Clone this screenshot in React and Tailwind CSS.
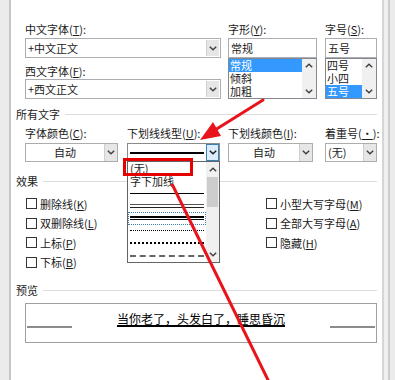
import React from "react";

const Chev = ({ up = false, color = "#404040" }) => (
  <svg width="8" height="5" viewBox="0 0 8 5">
    <polyline
      points={up ? "0.8,4.3 4,1.2 7.2,4.3" : "0.8,0.7 4,3.8 7.2,0.7"}
      fill="none"
      stroke={color}
      strokeWidth="1.4"
    />
  </svg>
);

const U = ({ children }) => (
  <span className="underline underline-offset-[1px]">{children}</span>
);

function Label({ children }) {
  return <div className="h-[14px] leading-[14px] whitespace-nowrap">{children}</div>;
}

function EditCombo({ text }) {
  return (
    <div className="h-[20px] flex border border-[#abadb3] bg-white">
      <div className="flex-1 pl-[2px] leading-[18px] whitespace-nowrap">{text}</div>
      <div className="w-[13px] flex items-center justify-center bg-[#e6e6e6] border-l border-[#cfcfcf] my-[1px] mr-[1px]">
        <Chev />
      </div>
    </div>
  );
}

function Combo({ text, center }) {
  return (
    <div className="h-[19px] flex border border-[#adadad] bg-white">
      <div
        className={
          center
            ? "flex-1 text-center leading-[17px] whitespace-nowrap"
            : "flex-1 pl-[2px] leading-[17px] whitespace-nowrap"
        }
      >
        {text}
      </div>
      <div className="w-[13px] flex items-center justify-center bg-[#e6e6e6] border-l border-[#cfcfcf]">
        <Chev />
      </div>
    </div>
  );
}

function ListBox({ items, sel }) {
  return (
    <div className="h-[41px] border border-[#828790] bg-white flex">
      <div className="flex-1 flex flex-col">
        {items.map((t, i) => (
          <div
            key={t}
            className={
              i === sel
                ? "h-[13px] leading-[13px] pl-[1px] bg-[#3399ff] text-white whitespace-nowrap"
                : "h-[13px] leading-[13px] pl-[1px] whitespace-nowrap"
            }
          >
            {t}
          </div>
        ))}
      </div>
      <div className="w-[14px] bg-[#f0f0f0] flex flex-col items-center justify-between py-[4px]">
        <Chev up />
        <Chev />
      </div>
    </div>
  );
}

function Group({ title }) {
  return (
    <div className="h-[14px] flex items-center">
      <span className="leading-[14px] whitespace-nowrap">{title}</span>
      <div className="flex-1 h-px bg-[#dcdcdc] ml-[5px]" />
    </div>
  );
}

function Check({ children }) {
  return (
    <div className="h-[19.5px] flex items-center">
      <div className="w-[11px] h-[11px] border border-[#333333] bg-white" />
      <span className="ml-[3px] leading-[14px] whitespace-nowrap">{children}</span>
    </div>
  );
}

function Row({ children, className = "" }) {
  return <div className={"h-[12.5px] flex items-center " + className}>{children}</div>;
}

export default function App() {
  return (
    <div className="relative w-[395px] h-[380px] overflow-hidden flex bg-white text-[11px] text-[#1a1a1a] font-['Noto_Sans_CJK_SC','Noto_Sans',sans-serif]">
      <div className="w-[11px] h-full bg-[#ebebeb] border-r-2 border-[#c6c6c6]" />
      <div className="w-[371px] h-full flex flex-col px-[5px]">
        {/* fonts row */}
        <div className="mt-[22px] pl-[9px] flex">
          <div className="w-[196px] flex flex-col">
            <Label>
              中文字体(<U>T</U>):
            </Label>
            <div className="mt-[2px]">
              <EditCombo text="+中文正文" />
            </div>
            <div className="mt-[6px]">
              <Label>
                西文字体(<U>F</U>):
              </Label>
            </div>
            <div className="mt-[1px]">
              <EditCombo text="+西文正文" />
            </div>
          </div>
          <div className="w-[89px] ml-[7px] flex flex-col">
            <Label>
              字形(<U>Y</U>):
            </Label>
            <div className="mt-[2px] h-[20px] border border-[#abadb3] pl-[2px] leading-[18px]">常规</div>
            <ListBox items={["常规", "倾斜", "加粗"]} sel={0} />
          </div>
          <div className="w-[52px] ml-[8px] flex flex-col">
            <Label>
              字号(<U>S</U>):
            </Label>
            <div className="mt-[2px] h-[20px] border border-[#abadb3] pl-[2px] leading-[18px]">五号</div>
            <ListBox items={["四号", "小四", "五号"]} sel={2} />
          </div>
        </div>

        {/* all text */}
        <div className="mt-[8px]">
          <Group title="所有文字" />
        </div>
        <div className="mt-[5px] pl-[9px] flex">
          <div className="w-[93px]">
            <Label>
              字体颜色(<U>C</U>):
            </Label>
            <div className="mt-[3px]">
              <Combo text="自动" center />
            </div>
          </div>
          <div className="w-[93px] ml-[9px]">
            <Label>
              下划线线型(<U>U</U>):
            </Label>
            <div className="mt-[3px] h-[19px] flex border border-[#8a8a8a] bg-white">
              <div className="flex-1 flex items-center px-[2px]">
                <div className="w-full h-[2px] bg-black" />
              </div>
              <div className="w-[13px] flex items-center justify-center bg-[#dcecfc] border border-[#3c7fb1]">
                <Chev color="#1a1a1a" />
              </div>
            </div>
          </div>
          <div className="w-[85px] ml-[8px]">
            <Label>
              下划线颜色(<U>I</U>):
            </Label>
            <div className="mt-[3px]">
              <Combo text="自动" center />
            </div>
          </div>
          <div className="w-[52px] ml-[12px]">
            <Label>
              着重号(<U>·</U>):
            </Label>
            <div className="mt-[3px]">
              <Combo text="(无)" />
            </div>
          </div>
        </div>

        {/* effects */}
        <div className="mt-[12px]">
          <Group title="效果" />
        </div>
        <div className="mt-[6px] pl-[9px] flex">
          <div className="w-[241px] pl-[1px] flex flex-col">
            <Check>
              删除线(<U>K</U>)
            </Check>
            <Check>
              双删除线(<U>L</U>)
            </Check>
            <Check>
              上标(<U>P</U>)
            </Check>
            <Check>
              下标(<U>B</U>)
            </Check>
          </div>
          <div className="flex flex-col">
            <Check>
              小型大写字母(<U>M</U>)
            </Check>
            <Check>
              全部大写字母(<U>A</U>)
            </Check>
            <Check>
              隐藏(<U>H</U>)
            </Check>
          </div>
        </div>

        {/* preview */}
        <div className="mt-[11px]">
          <Group title="预览" />
        </div>
        <div className="mt-[6px] ml-[9px] h-[40px] border border-[#a0a0a0] flex">
          <div className="w-[46px] pl-[1px] pt-[22px]">
            <div className="h-[2px] bg-[#8c8c8c]" />
          </div>
          <div className="flex-1 flex justify-center pt-[9px]">
            <span className="inline-block h-[14px] leading-[12px] text-[12px] text-black border-b-2 border-black whitespace-nowrap">
              当你老了，头发白了，睡思昏沉
            </span>
          </div>
          <div className="w-[46px] pr-[1px] pt-[22px]">
            <div className="h-[2px] bg-[#8c8c8c]" />
          </div>
        </div>
      </div>
      <div className="w-[13px] h-full flex">
        <div className="w-[2px] bg-[#d6d6d6]" />
        <div className="w-[4px] bg-[#f0f0f0]" />
        <div className="w-[2px] bg-[#cdcdcd]" />
        <div className="flex-1 bg-[#ebebeb]" />
      </div>

      {/* dropdown list */}
      <div className="absolute left-[127px] top-[161px] w-[93px] h-[102px] border border-[#646464] bg-white flex">
        <div className="flex-1 flex flex-col">
          <Row>
            <span className="pl-[2px] leading-[12px]">(无)</span>
          </Row>
          <Row>
            <span className="pl-[2px] leading-[12px]">字下加线</span>
          </Row>
          <Row className="px-[2px]">
            <div className="w-full h-px bg-black" />
          </Row>
          <Row className="px-[2px]">
            <div className="w-full flex flex-col gap-[2px]">
              <div className="h-px bg-[#555555]" />
              <div className="h-px bg-[#222222]" />
            </div>
          </Row>
          <Row className="border border-dotted border-[#3c7fb1] px-[1px]">
            <div className="w-full flex flex-col gap-[1px]">
              <div className="h-[1.5px] bg-black" />
              <div className="h-[1.5px] bg-black" />
            </div>
          </Row>
          <Row className="px-[2px]">
            <div className="w-full border-t border-dotted border-black" />
          </Row>
          <Row className="px-[2px]">
            <div className="w-full border-t-2 border-dotted border-black" />
          </Row>
          <Row className="px-[2px]">
            <div className="w-full border-t-2 border-dashed border-[#666666]" />
          </Row>
        </div>
        <div className="w-[13px] bg-[#f0f0f0] flex flex-col items-center">
          <div className="h-[15px] flex items-center">
            <Chev up />
          </div>
          <div className="w-[11px] h-[30px] bg-[#cdcdcd]" />
          <div className="flex-1" />
          <div className="h-[15px] flex items-center">
            <Chev />
          </div>
        </div>
      </div>

      {/* red highlight box */}
      <div className="absolute left-[123px] top-[158px] w-[70px] h-[18px] border-[3px] border-[#e60000]" />

      {/* red arrows */}
      <svg className="absolute left-0 top-0 pointer-events-none" width="395" height="380" viewBox="0 0 395 380">
        <line x1="263" y1="100" x2="215" y2="130" stroke="#e8141b" strokeWidth="3" strokeLinecap="round" />
        <polygon points="200,140 221,136 213,122" fill="#e8141b" />
        <line x1="172" y1="184" x2="269" y2="382" stroke="#e8141b" strokeWidth="3" />
      </svg>
    </div>
  );
}
